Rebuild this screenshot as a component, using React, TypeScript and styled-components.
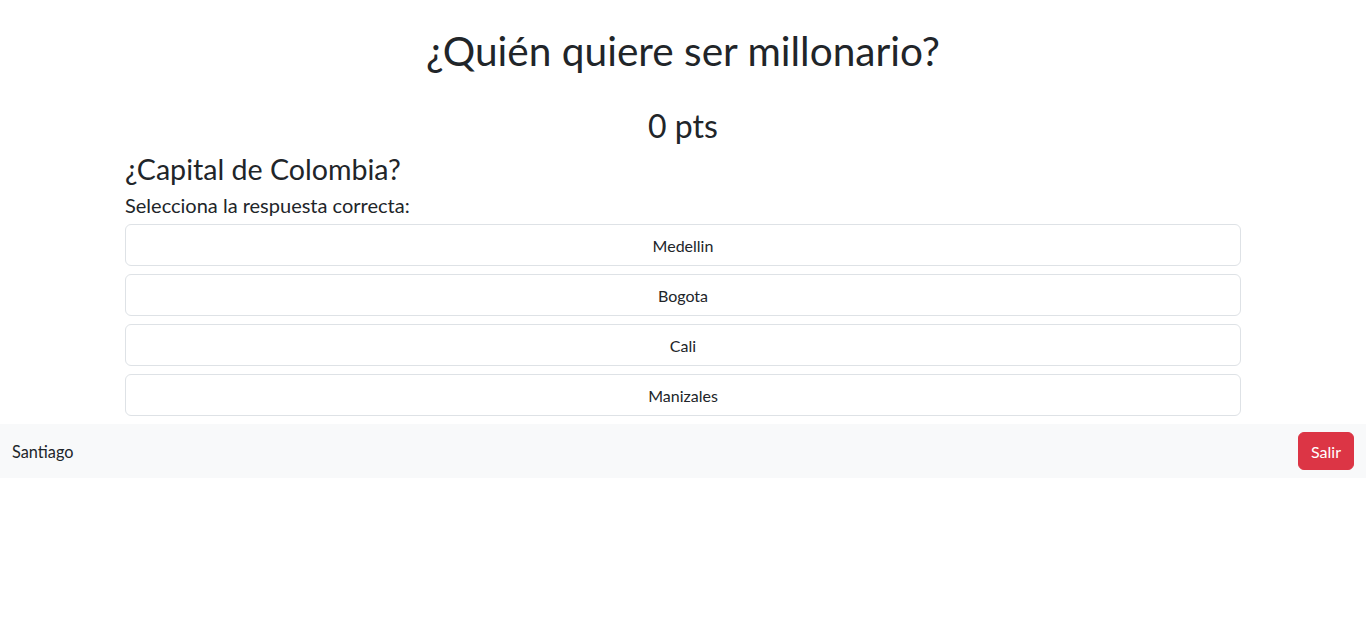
import React from "react";
import styled, { createGlobalStyle } from "styled-components";

const Global = createGlobalStyle`
  html, body { margin: 0; padding: 0; background: #fff; }
  body {
    font-family: "Segoe UI", Lato, "Noto Sans", "Liberation Sans", sans-serif;
    color: #212529;
    font-size: 16px;
    line-height: 1.5;
  }
  * { box-sizing: border-box; }
`;

const Container = styled.main`
  max-width: 1140px;
  margin: 0 auto;
  padding: 27px 12px 0;
`;

const Title = styled.h1`
  margin: 0 0 8px;
  font-size: 40.6px;
  font-weight: 400;
  line-height: 48px;
  text-align: center;
`;

const Score = styled.h2`
  margin: 32px 0 7px;
  font-size: 32px;
  font-weight: 400;
  line-height: 38px;
  text-align: center;
`;

const Question = styled.h3`
  margin: 0 0 4px;
  font-size: 28.6px;
  font-weight: 400;
  line-height: 34px;
`;

const Prompt = styled.p`
  margin: 0;
  padding-bottom: 4px;
  font-size: 20px;
  line-height: 30px;
`;

const Options = styled.div`
  display: flex;
  flex-direction: column;
  gap: 8px;
  padding-bottom: 8px;
`;

const Option = styled.button`
  display: block;
  width: 100%;
  height: 42px;
  padding: 9px 12px 7px;
  font: inherit;
  font-size: 16px;
  line-height: 24px;
  color: #212529;
  background: #fff;
  border: 1px solid #dee2e6;
  border-radius: 6px;
  text-align: center;
  cursor: pointer;
`;

const Footer = styled.footer`
  display: flex;
  justify-content: space-between;
  align-items: center;
  padding: 8px 12px;
  background: #f8f9fa;
`;

const User = styled.span`
  font-size: 16.3px;
  padding-top: 2px;
`;

const DangerButton = styled.button`
  font: inherit;
  font-size: 16px;
  line-height: 24px;
  padding: 7px 12px 5px;
  color: #fff;
  background: #dc3545;
  border: 1px solid #dc3545;
  border-radius: 6px;
  cursor: pointer;
`;

const options = ["Medellin", "Bogota", "Cali", "Manizales"];

export default function App() {
  return (
    <>
      <Global />
      <Container>
        <Title>¿Quién quiere ser millonario?</Title>
        <Score>0 pts</Score>
        <Question>¿Capital de Colombia?</Question>
        <Prompt>Selecciona la respuesta correcta:</Prompt>
        <Options>
          {options.map((o) => (
            <Option key={o}>{o}</Option>
          ))}
        </Options>
      </Container>
      <Footer>
        <User>Santiago</User>
        <DangerButton>Salir</DangerButton>
      </Footer>
    </>
  );
}
